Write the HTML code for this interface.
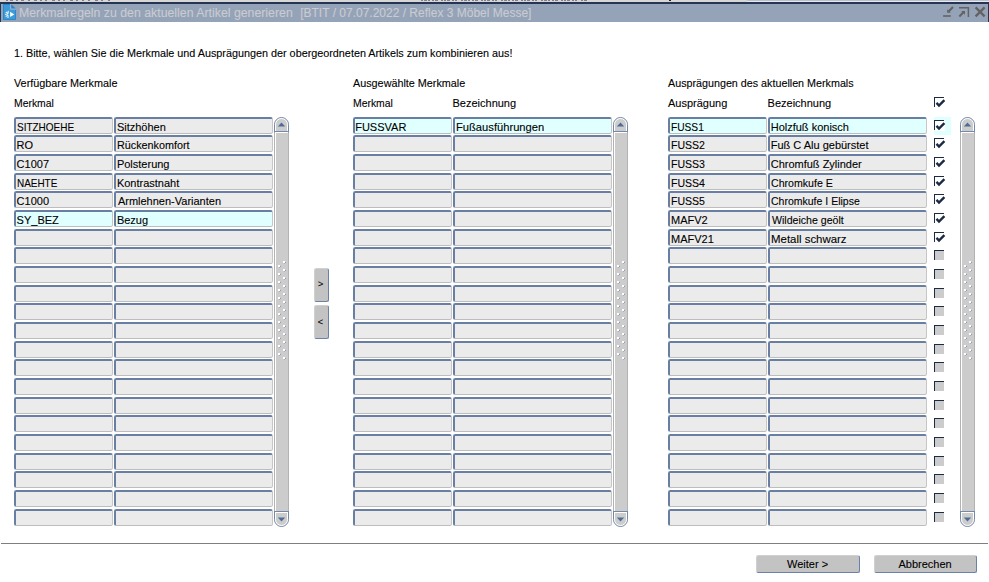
<!DOCTYPE html>
<html lang="de"><head><meta charset="utf-8"><title>Merkmalregeln zu den aktuellen Artikel generieren</title>
<style>
html,body{margin:0;padding:0;background:#fff;}
body{width:989px;height:582px;position:relative;overflow:hidden;font-family:"Liberation Sans", Arial, sans-serif;font-size:11px;color:#000;}
.a{position:absolute;}
.t{position:absolute;white-space:pre;transform-origin:0 0;line-height:1;-webkit-text-stroke:0.1px currentColor;}
.f{position:absolute;box-sizing:border-box;height:17px;background:#ebebeb;border-style:solid;border-width:2px 1px 1px 2px;border-color:#687fa3 #c6c6c6 #bdbdbd #687fa3;border-radius:2.5px;}
.f.h{background:#e0ffff;}
.btn{position:absolute;box-sizing:border-box;background:#c3c3c3;border-style:solid;border-width:1px;border-color:#d0d0d0 #6a82a8 #6a82a8 #d0d0d0;border-radius:2.5px;}
.cb{position:absolute;width:10px;height:10px;box-sizing:border-box;border-top:1px solid #1c2a44;border-left:1px solid #1c2a44;background:#fff;box-shadow:1px 1px 0 0 #fff;}
.cb.e{background:#ccc;}
.cb svg{position:absolute;left:-1px;top:-1px;overflow:visible;}

</style></head><body>
<div class="a" style="left:0;top:0;width:989px;height:2px;background:#d6d6d6"></div>
<div class="a" style="left:6px;top:0;width:2px;height:1px;background:#807c96"></div>
<div class="a" style="left:10px;top:0;width:3px;height:1px;background:#807c96"></div>
<div class="a" style="left:16px;top:0;width:2px;height:1px;background:#807c96"></div>
<div class="a" style="left:21px;top:0;width:3px;height:1px;background:#807c96"></div>
<div class="a" style="left:28px;top:0;width:2px;height:1px;background:#807c96"></div>
<div class="a" style="left:34px;top:0;width:3px;height:1px;background:#807c96"></div>
<div class="a" style="left:40px;top:0;width:2px;height:1px;background:#807c96"></div>
<div class="a" style="left:45px;top:0;width:2px;height:1px;background:#807c96"></div>
<div class="a" style="left:52px;top:0;width:3px;height:1px;background:#807c96"></div>
<div class="a" style="left:58px;top:0;width:2px;height:1px;background:#807c96"></div>
<div class="a" style="left:63px;top:0;width:2px;height:1px;background:#807c96"></div>
<div class="a" style="left:70px;top:0;width:3px;height:1px;background:#807c96"></div>
<div class="a" style="left:76px;top:0;width:2px;height:1px;background:#807c96"></div>
<div class="a" style="left:82px;top:0;width:2px;height:1px;background:#807c96"></div>
<div class="a" style="left:88px;top:0;width:2px;height:1px;background:#807c96"></div>
<div class="a" style="left:95px;top:0;width:3px;height:1px;background:#807c96"></div>
<div class="a" style="left:101px;top:0;width:2px;height:1px;background:#807c96"></div>
<div class="a" style="left:108px;top:0;width:2px;height:1px;background:#807c96"></div>
<div class="a" style="left:421px;top:0;width:2px;height:1px;background:#807c96"></div>
<div class="a" style="left:424px;top:0;width:3px;height:1px;background:#807c96"></div>
<div class="a" style="left:428px;top:0;width:2px;height:1px;background:#807c96"></div>
<div class="a" style="left:432px;top:0;width:2px;height:1px;background:#807c96"></div>
<div class="a" style="left:435px;top:0;width:3px;height:1px;background:#807c96"></div>
<div class="a" style="left:441px;top:0;width:2px;height:1px;background:#807c96"></div>
<div class="a" style="left:444px;top:0;width:2px;height:1px;background:#807c96"></div>
<div class="a" style="left:447px;top:0;width:3px;height:1px;background:#807c96"></div>
<div class="a" style="left:452px;top:0;width:2px;height:1px;background:#807c96"></div>
<div class="a" style="left:455px;top:0;width:2px;height:1px;background:#807c96"></div>
<div class="a" style="left:461px;top:0;width:2px;height:1px;background:#807c96"></div>
<div class="a" style="left:464px;top:0;width:3px;height:1px;background:#807c96"></div>
<div class="a" style="left:468px;top:0;width:2px;height:1px;background:#807c96"></div>
<div class="a" style="left:472px;top:0;width:2px;height:1px;background:#807c96"></div>
<div class="a" style="left:475px;top:0;width:3px;height:1px;background:#807c96"></div>
<div class="a" style="left:481px;top:0;width:2px;height:1px;background:#807c96"></div>
<div class="a" style="left:484px;top:0;width:2px;height:1px;background:#807c96"></div>
<div class="a" style="left:487px;top:0;width:3px;height:1px;background:#807c96"></div>
<div class="a" style="left:492px;top:0;width:2px;height:1px;background:#807c96"></div>
<div class="a" style="left:495px;top:0;width:2px;height:1px;background:#807c96"></div>
<div class="a" style="left:501px;top:0;width:2px;height:1px;background:#807c96"></div>
<div class="a" style="left:504px;top:0;width:3px;height:1px;background:#807c96"></div>
<div class="a" style="left:508px;top:0;width:2px;height:1px;background:#807c96"></div>
<div class="a" style="left:512px;top:0;width:2px;height:1px;background:#807c96"></div>
<div class="a" style="left:515px;top:0;width:3px;height:1px;background:#807c96"></div>
<div class="a" style="left:521px;top:0;width:2px;height:1px;background:#807c96"></div>
<div class="a" style="left:524px;top:0;width:2px;height:1px;background:#807c96"></div>
<div class="a" style="left:527px;top:0;width:3px;height:1px;background:#807c96"></div>
<div class="a" style="left:532px;top:0;width:2px;height:1px;background:#807c96"></div>
<div class="a" style="left:535px;top:0;width:2px;height:1px;background:#807c96"></div>
<div class="a" style="left:541px;top:0;width:2px;height:1px;background:#807c96"></div>
<div class="a" style="left:544px;top:0;width:3px;height:1px;background:#807c96"></div>
<div class="a" style="left:548px;top:0;width:2px;height:1px;background:#807c96"></div>
<div class="a" style="left:552px;top:0;width:2px;height:1px;background:#807c96"></div>
<div class="a" style="left:555px;top:0;width:3px;height:1px;background:#807c96"></div>
<div class="a" style="left:561px;top:0;width:2px;height:1px;background:#807c96"></div>
<div class="a" style="left:564px;top:0;width:2px;height:1px;background:#807c96"></div>
<div class="a" style="left:567px;top:0;width:3px;height:1px;background:#807c96"></div>
<div class="a" style="left:572px;top:0;width:2px;height:1px;background:#807c96"></div>
<div class="a" style="left:575px;top:0;width:2px;height:1px;background:#807c96"></div>
<div class="a" style="left:581px;top:0;width:2px;height:1px;background:#807c96"></div>
<div class="a" style="left:584px;top:0;width:3px;height:1px;background:#807c96"></div>
<div class="a" style="left:747px;top:0;width:242px;height:1px;background:#b7c1d3"></div><div class="a" style="left:747px;top:1px;width:242px;height:1px;background:#e9e9e9"></div><div class="a" style="left:669px;top:0;width:2px;height:1px;background:#222"></div>
<div class="a" style="left:0;top:2px;width:989px;height:20px;background:#263652"></div>
<div class="a" style="left:1px;top:4px;width:987px;height:18px;background:#95a3b8"></div>
<svg class="a" style="left:3px;top:4px" width="14" height="16" viewBox="0 0 14 16"><path d="M0 0H7V5.6H13V16H0Z" fill="#3d9bd9"/><path d="M0.5 0.5H7M0.5 0.5V15.5H12.5V5.6" fill="none" stroke="#2f86c9" stroke-width="1"/><path d="M8.2 0.2L13 4.7H8.2Z" fill="#2d84c8"/><path d="M7.1 7.7L11.3 10.4L7.1 13.1Z" fill="#fff"/><path d="M5.7 8.1A2.3 2.3 0 0 0 5.7 12.7Z" fill="#fff"/><path d="M5.7 7.3A3.1 3.1 0 0 0 5.7 13.5" fill="none" stroke="#fff" stroke-width="1.2" stroke-dasharray="1.05 1.0"/><circle cx="5.4" cy="10.4" r="1.0" fill="#4aa2dc"/><path d="M7.5 0V5.1H13" fill="none" stroke="#8fb4d6" stroke-width="1"/></svg>
<svg class="a" style="left:941px;top:5px" width="46" height="14" viewBox="0 0 46 14" fill="none" stroke="#636363"><path d="M2.1 11H9.8" stroke-width="1.6"/><path d="M12 2L7.6 6.4" stroke-width="2.1"/><path d="M6.1 4.3V7.7H9.8Z" fill="#636363" stroke="none"/><path d="M18 2.85H27.4V11.9" stroke-width="1.5"/><path d="M18.3 11.5L23 6.8" stroke-width="2.1"/><path d="M20.2 5.9H24V9.75Z" fill="#636363" stroke="none"/><path d="M34.6 2.4L43.6 11.4M43.6 2.4L34.6 11.4" stroke-width="2.3"/></svg>
<div class="f" style="left:14px;top:117px;width:99px"></div>
<div class="f" style="left:14px;top:135px;width:99px"></div>
<div class="f" style="left:14px;top:154px;width:99px"></div>
<div class="f" style="left:14px;top:173px;width:99px"></div>
<div class="f" style="left:14px;top:191px;width:99px"></div>
<div class="f h" style="left:14px;top:210px;width:99px"></div>
<div class="f" style="left:14px;top:229px;width:99px"></div>
<div class="f" style="left:14px;top:247px;width:99px"></div>
<div class="f" style="left:14px;top:266px;width:99px"></div>
<div class="f" style="left:14px;top:285px;width:99px"></div>
<div class="f" style="left:14px;top:303px;width:99px"></div>
<div class="f" style="left:14px;top:322px;width:99px"></div>
<div class="f" style="left:14px;top:341px;width:99px"></div>
<div class="f" style="left:14px;top:359px;width:99px"></div>
<div class="f" style="left:14px;top:378px;width:99px"></div>
<div class="f" style="left:14px;top:397px;width:99px"></div>
<div class="f" style="left:14px;top:415px;width:99px"></div>
<div class="f" style="left:14px;top:434px;width:99px"></div>
<div class="f" style="left:14px;top:453px;width:99px"></div>
<div class="f" style="left:14px;top:471px;width:99px"></div>
<div class="f" style="left:14px;top:490px;width:99px"></div>
<div class="f" style="left:14px;top:509px;width:99px"></div>
<div class="f" style="left:114px;top:117px;width:159px"></div>
<div class="f" style="left:114px;top:135px;width:159px"></div>
<div class="f" style="left:114px;top:154px;width:159px"></div>
<div class="f" style="left:114px;top:173px;width:159px"></div>
<div class="f" style="left:114px;top:191px;width:159px"></div>
<div class="f h" style="left:114px;top:210px;width:159px"></div>
<div class="f" style="left:114px;top:229px;width:159px"></div>
<div class="f" style="left:114px;top:247px;width:159px"></div>
<div class="f" style="left:114px;top:266px;width:159px"></div>
<div class="f" style="left:114px;top:285px;width:159px"></div>
<div class="f" style="left:114px;top:303px;width:159px"></div>
<div class="f" style="left:114px;top:322px;width:159px"></div>
<div class="f" style="left:114px;top:341px;width:159px"></div>
<div class="f" style="left:114px;top:359px;width:159px"></div>
<div class="f" style="left:114px;top:378px;width:159px"></div>
<div class="f" style="left:114px;top:397px;width:159px"></div>
<div class="f" style="left:114px;top:415px;width:159px"></div>
<div class="f" style="left:114px;top:434px;width:159px"></div>
<div class="f" style="left:114px;top:453px;width:159px"></div>
<div class="f" style="left:114px;top:471px;width:159px"></div>
<div class="f" style="left:114px;top:490px;width:159px"></div>
<div class="f" style="left:114px;top:509px;width:159px"></div>
<div class="f h" style="left:353px;top:117px;width:99px"></div>
<div class="f" style="left:353px;top:135px;width:99px"></div>
<div class="f" style="left:353px;top:154px;width:99px"></div>
<div class="f" style="left:353px;top:173px;width:99px"></div>
<div class="f" style="left:353px;top:191px;width:99px"></div>
<div class="f" style="left:353px;top:210px;width:99px"></div>
<div class="f" style="left:353px;top:229px;width:99px"></div>
<div class="f" style="left:353px;top:247px;width:99px"></div>
<div class="f" style="left:353px;top:266px;width:99px"></div>
<div class="f" style="left:353px;top:285px;width:99px"></div>
<div class="f" style="left:353px;top:303px;width:99px"></div>
<div class="f" style="left:353px;top:322px;width:99px"></div>
<div class="f" style="left:353px;top:341px;width:99px"></div>
<div class="f" style="left:353px;top:359px;width:99px"></div>
<div class="f" style="left:353px;top:378px;width:99px"></div>
<div class="f" style="left:353px;top:397px;width:99px"></div>
<div class="f" style="left:353px;top:415px;width:99px"></div>
<div class="f" style="left:353px;top:434px;width:99px"></div>
<div class="f" style="left:353px;top:453px;width:99px"></div>
<div class="f" style="left:353px;top:471px;width:99px"></div>
<div class="f" style="left:353px;top:490px;width:99px"></div>
<div class="f" style="left:353px;top:509px;width:99px"></div>
<div class="f h" style="left:453px;top:117px;width:159px"></div>
<div class="f" style="left:453px;top:135px;width:159px"></div>
<div class="f" style="left:453px;top:154px;width:159px"></div>
<div class="f" style="left:453px;top:173px;width:159px"></div>
<div class="f" style="left:453px;top:191px;width:159px"></div>
<div class="f" style="left:453px;top:210px;width:159px"></div>
<div class="f" style="left:453px;top:229px;width:159px"></div>
<div class="f" style="left:453px;top:247px;width:159px"></div>
<div class="f" style="left:453px;top:266px;width:159px"></div>
<div class="f" style="left:453px;top:285px;width:159px"></div>
<div class="f" style="left:453px;top:303px;width:159px"></div>
<div class="f" style="left:453px;top:322px;width:159px"></div>
<div class="f" style="left:453px;top:341px;width:159px"></div>
<div class="f" style="left:453px;top:359px;width:159px"></div>
<div class="f" style="left:453px;top:378px;width:159px"></div>
<div class="f" style="left:453px;top:397px;width:159px"></div>
<div class="f" style="left:453px;top:415px;width:159px"></div>
<div class="f" style="left:453px;top:434px;width:159px"></div>
<div class="f" style="left:453px;top:453px;width:159px"></div>
<div class="f" style="left:453px;top:471px;width:159px"></div>
<div class="f" style="left:453px;top:490px;width:159px"></div>
<div class="f" style="left:453px;top:509px;width:159px"></div>
<div class="f h" style="left:668px;top:117px;width:99px"></div>
<div class="f" style="left:668px;top:135px;width:99px"></div>
<div class="f" style="left:668px;top:154px;width:99px"></div>
<div class="f" style="left:668px;top:173px;width:99px"></div>
<div class="f" style="left:668px;top:191px;width:99px"></div>
<div class="f" style="left:668px;top:210px;width:99px"></div>
<div class="f" style="left:668px;top:229px;width:99px"></div>
<div class="f" style="left:668px;top:247px;width:99px"></div>
<div class="f" style="left:668px;top:266px;width:99px"></div>
<div class="f" style="left:668px;top:285px;width:99px"></div>
<div class="f" style="left:668px;top:303px;width:99px"></div>
<div class="f" style="left:668px;top:322px;width:99px"></div>
<div class="f" style="left:668px;top:341px;width:99px"></div>
<div class="f" style="left:668px;top:359px;width:99px"></div>
<div class="f" style="left:668px;top:378px;width:99px"></div>
<div class="f" style="left:668px;top:397px;width:99px"></div>
<div class="f" style="left:668px;top:415px;width:99px"></div>
<div class="f" style="left:668px;top:434px;width:99px"></div>
<div class="f" style="left:668px;top:453px;width:99px"></div>
<div class="f" style="left:668px;top:471px;width:99px"></div>
<div class="f" style="left:668px;top:490px;width:99px"></div>
<div class="f" style="left:668px;top:509px;width:99px"></div>
<div class="f h" style="left:768px;top:117px;width:159px"></div>
<div class="f" style="left:768px;top:135px;width:159px"></div>
<div class="f" style="left:768px;top:154px;width:159px"></div>
<div class="f" style="left:768px;top:173px;width:159px"></div>
<div class="f" style="left:768px;top:191px;width:159px"></div>
<div class="f" style="left:768px;top:210px;width:159px"></div>
<div class="f" style="left:768px;top:229px;width:159px"></div>
<div class="f" style="left:768px;top:247px;width:159px"></div>
<div class="f" style="left:768px;top:266px;width:159px"></div>
<div class="f" style="left:768px;top:285px;width:159px"></div>
<div class="f" style="left:768px;top:303px;width:159px"></div>
<div class="f" style="left:768px;top:322px;width:159px"></div>
<div class="f" style="left:768px;top:341px;width:159px"></div>
<div class="f" style="left:768px;top:359px;width:159px"></div>
<div class="f" style="left:768px;top:378px;width:159px"></div>
<div class="f" style="left:768px;top:397px;width:159px"></div>
<div class="f" style="left:768px;top:415px;width:159px"></div>
<div class="f" style="left:768px;top:434px;width:159px"></div>
<div class="f" style="left:768px;top:453px;width:159px"></div>
<div class="f" style="left:768px;top:471px;width:159px"></div>
<div class="f" style="left:768px;top:490px;width:159px"></div>
<div class="f" style="left:768px;top:509px;width:159px"></div>
<svg class="a" style="left:274px;top:117px" width="15" height="410" viewBox="0 0 15 410"><rect x="0" y="8" width="15" height="394" fill="#ccc"/><rect x="0" y="15" width="1" height="380" fill="#b2b2b2"/><rect x="1" y="15" width="1" height="380" fill="#fff"/><rect x="14" y="15" width="1" height="380" fill="#b2b2b2"/><path d="M0.5 15V7.5A7 7 0 0 1 14.5 7.5V15Z" fill="#ccc" stroke="#7289ab"/><path d="M1.5 14V7.5A6 6 0 0 1 13.5 7.5V14" fill="none" stroke="#fff"/><rect x="0" y="14" width="15" height="1" fill="#7289ab"/><rect x="1" y="15" width="13" height="1" fill="#fff"/><path d="M7.5 5.6L11.2 9.6H3.8Z" fill="#4f6c96"/><path d="M0.5 395V402.5A7 7 0 0 0 14.5 402.5V395Z" fill="#ccc" stroke="#7289ab"/><path d="M1.5 396V402.5A6 6 0 0 0 13.5 402.5V396" fill="none" stroke="#fff"/><rect x="0" y="394" width="15" height="1" fill="#7289ab"/><rect x="1" y="395" width="13" height="1" fill="#fff"/><path d="M7.5 404.4L11.2 400.4H3.8Z" fill="#4f6c96"/><rect x="9" y="144" width="2" height="2" fill="#fff"/><path d="M10.4 146.6L12 145" stroke="#7f95b8" stroke-width="0.9"/><rect x="9" y="152" width="2" height="2" fill="#fff"/><path d="M10.4 154.6L12 153" stroke="#7f95b8" stroke-width="0.9"/><rect x="9" y="160" width="2" height="2" fill="#fff"/><path d="M10.4 162.6L12 161" stroke="#7f95b8" stroke-width="0.9"/><rect x="9" y="168" width="2" height="2" fill="#fff"/><path d="M10.4 170.6L12 169" stroke="#7f95b8" stroke-width="0.9"/><rect x="9" y="176" width="2" height="2" fill="#fff"/><path d="M10.4 178.6L12 177" stroke="#7f95b8" stroke-width="0.9"/><rect x="9" y="184" width="2" height="2" fill="#fff"/><path d="M10.4 186.6L12 185" stroke="#7f95b8" stroke-width="0.9"/><rect x="9" y="192" width="2" height="2" fill="#fff"/><path d="M10.4 194.6L12 193" stroke="#7f95b8" stroke-width="0.9"/><rect x="9" y="200" width="2" height="2" fill="#fff"/><path d="M10.4 202.6L12 201" stroke="#7f95b8" stroke-width="0.9"/><rect x="9" y="208" width="2" height="2" fill="#fff"/><path d="M10.4 210.6L12 209" stroke="#7f95b8" stroke-width="0.9"/><rect x="9" y="216" width="2" height="2" fill="#fff"/><path d="M10.4 218.6L12 217" stroke="#7f95b8" stroke-width="0.9"/><rect x="9" y="224" width="2" height="2" fill="#fff"/><path d="M10.4 226.6L12 225" stroke="#7f95b8" stroke-width="0.9"/><rect x="9" y="232" width="2" height="2" fill="#fff"/><path d="M10.4 234.6L12 233" stroke="#7f95b8" stroke-width="0.9"/><rect x="9" y="240" width="2" height="2" fill="#fff"/><path d="M10.4 242.6L12 241" stroke="#7f95b8" stroke-width="0.9"/><rect x="4" y="148" width="2" height="2" fill="#fff"/><path d="M5.4 150.6L7 149" stroke="#7f95b8" stroke-width="0.9"/><rect x="4" y="156" width="2" height="2" fill="#fff"/><path d="M5.4 158.6L7 157" stroke="#7f95b8" stroke-width="0.9"/><rect x="4" y="164" width="2" height="2" fill="#fff"/><path d="M5.4 166.6L7 165" stroke="#7f95b8" stroke-width="0.9"/><rect x="4" y="172" width="2" height="2" fill="#fff"/><path d="M5.4 174.6L7 173" stroke="#7f95b8" stroke-width="0.9"/><rect x="4" y="180" width="2" height="2" fill="#fff"/><path d="M5.4 182.6L7 181" stroke="#7f95b8" stroke-width="0.9"/><rect x="4" y="188" width="2" height="2" fill="#fff"/><path d="M5.4 190.6L7 189" stroke="#7f95b8" stroke-width="0.9"/><rect x="4" y="196" width="2" height="2" fill="#fff"/><path d="M5.4 198.6L7 197" stroke="#7f95b8" stroke-width="0.9"/><rect x="4" y="204" width="2" height="2" fill="#fff"/><path d="M5.4 206.6L7 205" stroke="#7f95b8" stroke-width="0.9"/><rect x="4" y="212" width="2" height="2" fill="#fff"/><path d="M5.4 214.6L7 213" stroke="#7f95b8" stroke-width="0.9"/><rect x="4" y="220" width="2" height="2" fill="#fff"/><path d="M5.4 222.6L7 221" stroke="#7f95b8" stroke-width="0.9"/><rect x="4" y="228" width="2" height="2" fill="#fff"/><path d="M5.4 230.6L7 229" stroke="#7f95b8" stroke-width="0.9"/><rect x="4" y="236" width="2" height="2" fill="#fff"/><path d="M5.4 238.6L7 237" stroke="#7f95b8" stroke-width="0.9"/></svg>
<svg class="a" style="left:613px;top:117px" width="15" height="410" viewBox="0 0 15 410"><rect x="0" y="8" width="15" height="394" fill="#ccc"/><rect x="0" y="15" width="1" height="380" fill="#b2b2b2"/><rect x="1" y="15" width="1" height="380" fill="#fff"/><rect x="14" y="15" width="1" height="380" fill="#b2b2b2"/><path d="M0.5 15V7.5A7 7 0 0 1 14.5 7.5V15Z" fill="#ccc" stroke="#7289ab"/><path d="M1.5 14V7.5A6 6 0 0 1 13.5 7.5V14" fill="none" stroke="#fff"/><rect x="0" y="14" width="15" height="1" fill="#7289ab"/><rect x="1" y="15" width="13" height="1" fill="#fff"/><path d="M7.5 5.6L11.2 9.6H3.8Z" fill="#4f6c96"/><path d="M0.5 395V402.5A7 7 0 0 0 14.5 402.5V395Z" fill="#ccc" stroke="#7289ab"/><path d="M1.5 396V402.5A6 6 0 0 0 13.5 402.5V396" fill="none" stroke="#fff"/><rect x="0" y="394" width="15" height="1" fill="#7289ab"/><rect x="1" y="395" width="13" height="1" fill="#fff"/><path d="M7.5 404.4L11.2 400.4H3.8Z" fill="#4f6c96"/><rect x="9" y="144" width="2" height="2" fill="#fff"/><path d="M10.4 146.6L12 145" stroke="#7f95b8" stroke-width="0.9"/><rect x="9" y="152" width="2" height="2" fill="#fff"/><path d="M10.4 154.6L12 153" stroke="#7f95b8" stroke-width="0.9"/><rect x="9" y="160" width="2" height="2" fill="#fff"/><path d="M10.4 162.6L12 161" stroke="#7f95b8" stroke-width="0.9"/><rect x="9" y="168" width="2" height="2" fill="#fff"/><path d="M10.4 170.6L12 169" stroke="#7f95b8" stroke-width="0.9"/><rect x="9" y="176" width="2" height="2" fill="#fff"/><path d="M10.4 178.6L12 177" stroke="#7f95b8" stroke-width="0.9"/><rect x="9" y="184" width="2" height="2" fill="#fff"/><path d="M10.4 186.6L12 185" stroke="#7f95b8" stroke-width="0.9"/><rect x="9" y="192" width="2" height="2" fill="#fff"/><path d="M10.4 194.6L12 193" stroke="#7f95b8" stroke-width="0.9"/><rect x="9" y="200" width="2" height="2" fill="#fff"/><path d="M10.4 202.6L12 201" stroke="#7f95b8" stroke-width="0.9"/><rect x="9" y="208" width="2" height="2" fill="#fff"/><path d="M10.4 210.6L12 209" stroke="#7f95b8" stroke-width="0.9"/><rect x="9" y="216" width="2" height="2" fill="#fff"/><path d="M10.4 218.6L12 217" stroke="#7f95b8" stroke-width="0.9"/><rect x="9" y="224" width="2" height="2" fill="#fff"/><path d="M10.4 226.6L12 225" stroke="#7f95b8" stroke-width="0.9"/><rect x="9" y="232" width="2" height="2" fill="#fff"/><path d="M10.4 234.6L12 233" stroke="#7f95b8" stroke-width="0.9"/><rect x="9" y="240" width="2" height="2" fill="#fff"/><path d="M10.4 242.6L12 241" stroke="#7f95b8" stroke-width="0.9"/><rect x="4" y="148" width="2" height="2" fill="#fff"/><path d="M5.4 150.6L7 149" stroke="#7f95b8" stroke-width="0.9"/><rect x="4" y="156" width="2" height="2" fill="#fff"/><path d="M5.4 158.6L7 157" stroke="#7f95b8" stroke-width="0.9"/><rect x="4" y="164" width="2" height="2" fill="#fff"/><path d="M5.4 166.6L7 165" stroke="#7f95b8" stroke-width="0.9"/><rect x="4" y="172" width="2" height="2" fill="#fff"/><path d="M5.4 174.6L7 173" stroke="#7f95b8" stroke-width="0.9"/><rect x="4" y="180" width="2" height="2" fill="#fff"/><path d="M5.4 182.6L7 181" stroke="#7f95b8" stroke-width="0.9"/><rect x="4" y="188" width="2" height="2" fill="#fff"/><path d="M5.4 190.6L7 189" stroke="#7f95b8" stroke-width="0.9"/><rect x="4" y="196" width="2" height="2" fill="#fff"/><path d="M5.4 198.6L7 197" stroke="#7f95b8" stroke-width="0.9"/><rect x="4" y="204" width="2" height="2" fill="#fff"/><path d="M5.4 206.6L7 205" stroke="#7f95b8" stroke-width="0.9"/><rect x="4" y="212" width="2" height="2" fill="#fff"/><path d="M5.4 214.6L7 213" stroke="#7f95b8" stroke-width="0.9"/><rect x="4" y="220" width="2" height="2" fill="#fff"/><path d="M5.4 222.6L7 221" stroke="#7f95b8" stroke-width="0.9"/><rect x="4" y="228" width="2" height="2" fill="#fff"/><path d="M5.4 230.6L7 229" stroke="#7f95b8" stroke-width="0.9"/><rect x="4" y="236" width="2" height="2" fill="#fff"/><path d="M5.4 238.6L7 237" stroke="#7f95b8" stroke-width="0.9"/></svg>
<svg class="a" style="left:960px;top:117px" width="15" height="410" viewBox="0 0 15 410"><rect x="0" y="8" width="15" height="394" fill="#ccc"/><rect x="0" y="15" width="1" height="380" fill="#b2b2b2"/><rect x="1" y="15" width="1" height="380" fill="#fff"/><rect x="14" y="15" width="1" height="380" fill="#b2b2b2"/><path d="M0.5 15V7.5A7 7 0 0 1 14.5 7.5V15Z" fill="#ccc" stroke="#7289ab"/><path d="M1.5 14V7.5A6 6 0 0 1 13.5 7.5V14" fill="none" stroke="#fff"/><rect x="0" y="14" width="15" height="1" fill="#7289ab"/><rect x="1" y="15" width="13" height="1" fill="#fff"/><path d="M7.5 5.6L11.2 9.6H3.8Z" fill="#4f6c96"/><path d="M0.5 395V402.5A7 7 0 0 0 14.5 402.5V395Z" fill="#ccc" stroke="#7289ab"/><path d="M1.5 396V402.5A6 6 0 0 0 13.5 402.5V396" fill="none" stroke="#fff"/><rect x="0" y="394" width="15" height="1" fill="#7289ab"/><rect x="1" y="395" width="13" height="1" fill="#fff"/><path d="M7.5 404.4L11.2 400.4H3.8Z" fill="#4f6c96"/><rect x="9" y="144" width="2" height="2" fill="#fff"/><path d="M10.4 146.6L12 145" stroke="#7f95b8" stroke-width="0.9"/><rect x="9" y="152" width="2" height="2" fill="#fff"/><path d="M10.4 154.6L12 153" stroke="#7f95b8" stroke-width="0.9"/><rect x="9" y="160" width="2" height="2" fill="#fff"/><path d="M10.4 162.6L12 161" stroke="#7f95b8" stroke-width="0.9"/><rect x="9" y="168" width="2" height="2" fill="#fff"/><path d="M10.4 170.6L12 169" stroke="#7f95b8" stroke-width="0.9"/><rect x="9" y="176" width="2" height="2" fill="#fff"/><path d="M10.4 178.6L12 177" stroke="#7f95b8" stroke-width="0.9"/><rect x="9" y="184" width="2" height="2" fill="#fff"/><path d="M10.4 186.6L12 185" stroke="#7f95b8" stroke-width="0.9"/><rect x="9" y="192" width="2" height="2" fill="#fff"/><path d="M10.4 194.6L12 193" stroke="#7f95b8" stroke-width="0.9"/><rect x="9" y="200" width="2" height="2" fill="#fff"/><path d="M10.4 202.6L12 201" stroke="#7f95b8" stroke-width="0.9"/><rect x="9" y="208" width="2" height="2" fill="#fff"/><path d="M10.4 210.6L12 209" stroke="#7f95b8" stroke-width="0.9"/><rect x="9" y="216" width="2" height="2" fill="#fff"/><path d="M10.4 218.6L12 217" stroke="#7f95b8" stroke-width="0.9"/><rect x="9" y="224" width="2" height="2" fill="#fff"/><path d="M10.4 226.6L12 225" stroke="#7f95b8" stroke-width="0.9"/><rect x="9" y="232" width="2" height="2" fill="#fff"/><path d="M10.4 234.6L12 233" stroke="#7f95b8" stroke-width="0.9"/><rect x="9" y="240" width="2" height="2" fill="#fff"/><path d="M10.4 242.6L12 241" stroke="#7f95b8" stroke-width="0.9"/><rect x="4" y="148" width="2" height="2" fill="#fff"/><path d="M5.4 150.6L7 149" stroke="#7f95b8" stroke-width="0.9"/><rect x="4" y="156" width="2" height="2" fill="#fff"/><path d="M5.4 158.6L7 157" stroke="#7f95b8" stroke-width="0.9"/><rect x="4" y="164" width="2" height="2" fill="#fff"/><path d="M5.4 166.6L7 165" stroke="#7f95b8" stroke-width="0.9"/><rect x="4" y="172" width="2" height="2" fill="#fff"/><path d="M5.4 174.6L7 173" stroke="#7f95b8" stroke-width="0.9"/><rect x="4" y="180" width="2" height="2" fill="#fff"/><path d="M5.4 182.6L7 181" stroke="#7f95b8" stroke-width="0.9"/><rect x="4" y="188" width="2" height="2" fill="#fff"/><path d="M5.4 190.6L7 189" stroke="#7f95b8" stroke-width="0.9"/><rect x="4" y="196" width="2" height="2" fill="#fff"/><path d="M5.4 198.6L7 197" stroke="#7f95b8" stroke-width="0.9"/><rect x="4" y="204" width="2" height="2" fill="#fff"/><path d="M5.4 206.6L7 205" stroke="#7f95b8" stroke-width="0.9"/><rect x="4" y="212" width="2" height="2" fill="#fff"/><path d="M5.4 214.6L7 213" stroke="#7f95b8" stroke-width="0.9"/><rect x="4" y="220" width="2" height="2" fill="#fff"/><path d="M5.4 222.6L7 221" stroke="#7f95b8" stroke-width="0.9"/><rect x="4" y="228" width="2" height="2" fill="#fff"/><path d="M5.4 230.6L7 229" stroke="#7f95b8" stroke-width="0.9"/><rect x="4" y="236" width="2" height="2" fill="#fff"/><path d="M5.4 238.6L7 237" stroke="#7f95b8" stroke-width="0.9"/></svg>
<div class="btn" style="left:314px;top:268px;width:15px;height:34px"></div>
<div class="btn" style="left:314px;top:305px;width:15px;height:34px"></div>
<div class="a" style="left:1px;top:543px;width:987px;height:1px;background:#7f7f7f"></div>
<div class="btn" style="left:756px;top:555px;width:104px;height:18px"></div>
<div class="btn" style="left:874px;top:555px;width:103px;height:18px"></div>
<div class="cb" style="left:934px;top:97px"><svg width="12" height="11" viewBox="0 0 12 11"><path d="M2.5 5.9L5 8.5L10.4 3.1" fill="none" stroke="#1c2a44" stroke-width="2.4"/></svg></div>
<div class="a" style="left:934px;top:117px;width:17px;height:18px;background:#e0ffff"></div>
<div class="cb" style="left:934px;top:120px;"><svg width="12" height="11" viewBox="0 0 12 11"><path d="M2.5 5.9L5 8.5L10.4 3.1" fill="none" stroke="#1c2a44" stroke-width="2.4"/></svg></div>
<div class="cb" style="left:934px;top:138px;"><svg width="12" height="11" viewBox="0 0 12 11"><path d="M2.5 5.9L5 8.5L10.4 3.1" fill="none" stroke="#1c2a44" stroke-width="2.4"/></svg></div>
<div class="cb" style="left:934px;top:157px;"><svg width="12" height="11" viewBox="0 0 12 11"><path d="M2.5 5.9L5 8.5L10.4 3.1" fill="none" stroke="#1c2a44" stroke-width="2.4"/></svg></div>
<div class="cb" style="left:934px;top:176px;"><svg width="12" height="11" viewBox="0 0 12 11"><path d="M2.5 5.9L5 8.5L10.4 3.1" fill="none" stroke="#1c2a44" stroke-width="2.4"/></svg></div>
<div class="cb" style="left:934px;top:194px;"><svg width="12" height="11" viewBox="0 0 12 11"><path d="M2.5 5.9L5 8.5L10.4 3.1" fill="none" stroke="#1c2a44" stroke-width="2.4"/></svg></div>
<div class="cb" style="left:934px;top:213px;"><svg width="12" height="11" viewBox="0 0 12 11"><path d="M2.5 5.9L5 8.5L10.4 3.1" fill="none" stroke="#1c2a44" stroke-width="2.4"/></svg></div>
<div class="cb" style="left:934px;top:232px;"><svg width="12" height="11" viewBox="0 0 12 11"><path d="M2.5 5.9L5 8.5L10.4 3.1" fill="none" stroke="#1c2a44" stroke-width="2.4"/></svg></div>
<div class="cb e" style="left:934px;top:250px"></div>
<div class="cb e" style="left:934px;top:269px"></div>
<div class="cb e" style="left:934px;top:288px"></div>
<div class="cb e" style="left:934px;top:306px"></div>
<div class="cb e" style="left:934px;top:325px"></div>
<div class="cb e" style="left:934px;top:344px"></div>
<div class="cb e" style="left:934px;top:362px"></div>
<div class="cb e" style="left:934px;top:381px"></div>
<div class="cb e" style="left:934px;top:400px"></div>
<div class="cb e" style="left:934px;top:418px"></div>
<div class="cb e" style="left:934px;top:437px"></div>
<div class="cb e" style="left:934px;top:456px"></div>
<div class="cb e" style="left:934px;top:474px"></div>
<div class="cb e" style="left:934px;top:493px"></div>
<div class="cb e" style="left:934px;top:512px"></div>
<span class="t" style="left:18.7px;top:7px;font-size:12px;color:#c9ccd1;transform:scaleX(1.026);">Merkmalregeln zu den aktuellen Artikel generieren</span>
<span class="t" style="left:300.2px;top:7px;font-size:12px;color:#c9ccd1;">[BTIT / 07.07.2022 / Reflex 3 Möbel Messe]</span>
<span class="t" style="left:13.7px;top:48px;transform:scaleX(0.982);">1. Bitte, wählen Sie die Merkmale und Ausprägungen der obergeordneten Artikels zum kombinieren aus!</span>
<span class="t" style="left:14.3px;top:78px;transform:scaleX(0.984);">Verfügbare Merkmale</span>
<span class="t" style="left:13.5px;top:98px;transform:scaleX(0.946);">Merkmal</span>
<span class="t" style="left:353.0px;top:78px;transform:scaleX(0.982);">Ausgewählte Merkmale</span>
<span class="t" style="left:352.5px;top:98px;transform:scaleX(0.946);">Merkmal</span>
<span class="t" style="left:452.5px;top:98px;">Bezeichnung</span>
<span class="t" style="left:668.0px;top:78px;transform:scaleX(0.976);">Ausprägungen des aktuellen Merkmals</span>
<span class="t" style="left:668.0px;top:98px;">Ausprägung</span>
<span class="t" style="left:767.6px;top:98px;">Bezeichnung</span>
<span class="t" style="left:16.7px;top:122px;transform:scaleX(0.907);">SITZHOEHE</span>
<span class="t" style="left:16.6px;top:140px;">RO</span>
<span class="t" style="left:16.6px;top:159px;">C1007</span>
<span class="t" style="left:16.7px;top:178px;transform:scaleX(0.902);">NAEHTE</span>
<span class="t" style="left:16.6px;top:196px;">C1000</span>
<span class="t" style="left:16.6px;top:215px;">SY_BEZ</span>
<span class="t" style="left:116.9px;top:122px;">Sitzhöhen</span>
<span class="t" style="left:116.9px;top:140px;transform:scaleX(0.981);">Rückenkomfort</span>
<span class="t" style="left:116.9px;top:159px;">Polsterung</span>
<span class="t" style="left:116.9px;top:178px;">Kontrastnaht</span>
<span class="t" style="left:117.9px;top:196px;">Armlehnen-Varianten</span>
<span class="t" style="left:116.9px;top:215px;">Bezug</span>
<span class="t" style="left:355.2px;top:122px;">FUSSVAR</span>
<span class="t" style="left:455.5px;top:122px;transform:scaleX(1.016);">Fußausführungen</span>
<span class="t" style="left:671.1px;top:122px;transform:scaleX(0.926);">FUSS1</span>
<span class="t" style="left:671.0px;top:140px;transform:scaleX(0.956);">FUSS2</span>
<span class="t" style="left:671.0px;top:159px;transform:scaleX(0.956);">FUSS3</span>
<span class="t" style="left:671.0px;top:178px;transform:scaleX(0.956);">FUSS4</span>
<span class="t" style="left:671.0px;top:196px;transform:scaleX(0.956);">FUSS5</span>
<span class="t" style="left:671.0px;top:215px;">MAFV2</span>
<span class="t" style="left:671.0px;top:234px;">MAFV21</span>
<span class="t" style="left:770.7px;top:122px;">Holzfuß konisch</span>
<span class="t" style="left:770.7px;top:140px;">Fuß C Alu gebürstet</span>
<span class="t" style="left:770.7px;top:159px;">Chromfuß Zylinder</span>
<span class="t" style="left:770.7px;top:178px;transform:scaleX(0.963);">Chromkufe E</span>
<span class="t" style="left:770.7px;top:196px;transform:scaleX(0.955);">Chromkufe I Elipse</span>
<span class="t" style="left:771.7px;top:215px;transform:scaleX(0.961);">Wildeiche geölt</span>
<span class="t" style="left:770.7px;top:234px;transform:scaleX(1.039);">Metall schwarz</span>
<span class="t" style="left:787.0px;top:559px;">Weiter &gt;</span>
<span class="t" style="left:898.5px;top:559px;">Abbrechen</span>
<span class="t" style="left:317.9px;top:280px;font-size:9px;">&gt;</span>
<span class="t" style="left:317.7px;top:318px;font-size:9px;">&lt;</span>
</body></html>
